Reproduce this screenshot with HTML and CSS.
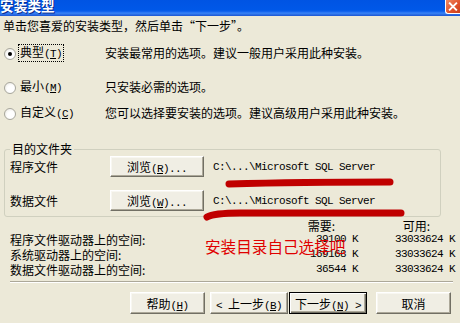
FILE: index.html
```html
<!DOCTYPE html>
<html lang="zh-CN">
<head>
<meta charset="utf-8">
<title>安装类型</title>
<link rel="stylesheet" href="styles.css">
</head>
<body>
<div class="win">
  <div class="titlebar">
    <span class="title">安装类型</span>
    <span class="close"><svg width="15" height="14" viewBox="0 0 15 14"><path d="M4 3 L11 10 M11 3 L4 10" stroke="#fff" stroke-width="2" stroke-linecap="square"/></svg></span>
  </div>
  <div class="intro">单击您喜爱的安装类型，然后单击“下一步”。</div>
  <div class="options">
    <div class="opt opt1">
      <span class="radio checked"></span>
      <span class="olabel focus">典型<span class="mono">(<u>T</u>)</span></span>
      <span class="odesc">安装最常用的选项。建议一般用户采用此种安装。</span>
    </div>
    <div class="opt opt2">
      <span class="radio"></span>
      <span class="olabel">最小<span class="mono">(<u>M</u>)</span></span>
      <span class="odesc">只安装必需的选项。</span>
    </div>
    <div class="opt opt3">
      <span class="radio"></span>
      <span class="olabel">自定义<span class="mono">(<u>C</u>)</span></span>
      <span class="odesc">您可以选择要安装的选项。建议高级用户采用此种安装。</span>
    </div>
  </div>
  <fieldset class="group">
    <legend>目的文件夹</legend>
    <div class="frow">
      <span class="flabel">程序文件</span>
      <span class="btn browse"><span>浏览<span class="mono">(<u>R</u>)...</span></span></span>
      <span class="path mono">C:\...\Microsoft SQL Server</span>
    </div>
    <div class="frow frow2">
      <span class="flabel">数据文件</span>
      <span class="btn browse"><span>浏览<span class="mono">(<u>W</u>)...</span></span></span>
      <span class="path mono">C:\...\Microsoft SQL Server</span>
    </div>
  </fieldset>
  <div class="space">
    <span></span>
    <span class="hdr hneed">需要:</span>
    <span class="hdr havail">可用:</span>
    <span class="slabel">程序文件驱动器上的空间:</span>
    <span class="num mono">39100 K</span>
    <span class="num mono">33033624 K</span>
    <span class="slabel">系统驱动器上的空间:</span>
    <span class="num mono">169168 K</span>
    <span class="num mono">33033624 K</span>
    <span class="slabel">数据文件驱动器上的空间:</span>
    <span class="num mono">36544 K</span>
    <span class="num mono">33033624 K</span>
  </div>
  <div class="sep"></div>
  <div class="buttons">
    <span class="btn bhelp"><span>帮助<span class="mono">(<u>H</u>)</span></span></span>
    <span class="btn bback"><span><span class="mono">&lt; </span>上一步<span class="mono">(<u>B</u>)</span></span></span>
    <span class="btn bnext"><span>下一步<span class="mono">(<u>N</u>) &gt;</span></span></span>
    <span class="btn bcancel">取消</span>
  </div>
  <svg class="marks" width="460" height="323" viewBox="0 0 460 323">
    <path d="M229 184 Q300 182 390 182" fill="none" stroke="#c00000" stroke-width="7" stroke-linecap="round"/>
    <path d="M207 217 Q214 213 240 213 L401 213" fill="none" stroke="#c00000" stroke-width="7" stroke-linecap="round"/>
  </svg>
  <div class="note">安装目录自己选择吧</div>
</div>
</body>
</html>
```

FILE: styles.css
```css
html, body {
  margin: 0;
  padding: 0;
  background: #ece9d8;
}
.win {
  position: relative;
  width: 460px;
  height: 323px;
  overflow: hidden;
  background: #ece9d8;
  font-family: "Noto Sans CJK SC", sans-serif;
  font-size: 12px;
  color: #000;
}
.mono {
  font-family: "Liberation Mono", monospace;
  font-size: 11px;
  letter-spacing: -0.6px;
}
u { text-decoration: underline; text-underline-offset: 1px; }

.titlebar {
  height: 16px;
  display: flex;
  justify-content: space-between;
  align-items: flex-start;
  background: linear-gradient(#0054e3 0, #0058e8 10px, #1a68f0 12px, #3a86f7 13px, #2f74ea 14px, #1c56d2 16px);
}
.title {
  color: #fff;
  font-weight: bold;
  font-size: 13.5px;
  line-height: 14px;
  margin-top: -2px;
  letter-spacing: 0.2px;
  text-shadow: 1px 1px 0 #0a2a8a;
}
.close {
  width: 15px;
  height: 14px;
  background: linear-gradient(135deg, #f08a62, #e0502a 60%, #c8401c);
  border-left: 1px solid #fff;
  border-bottom: 1px solid #fff;
  border-bottom-left-radius: 3px;
  box-sizing: border-box;
  display: flex;
}
.close svg { display: block; }

.intro {
  height: 20px;
  line-height: 20px;
  padding-left: 3px;
  white-space: nowrap;
}

.options { margin-top: 7px; }
.opt {
  display: grid;
  grid-template-columns: 14px 87px 1fr;
  align-items: center;
  height: 20px;
  padding-left: 4px;
  white-space: nowrap;
}
.opt2 { margin-top: 14px; }
.opt3 { margin-top: 6px; }
.radio {
  width: 12px;
  height: 12px;
  box-sizing: border-box;
  border-radius: 50%;
  border: 1px solid #a7a69c;
  background: radial-gradient(circle at 60% 60%, #ffffff 40%, #e6e4dc 100%);
  display: flex;
  align-items: center;
  justify-content: center;
  margin-top: 1px;
}
.radio.checked::after {
  content: "";
  width: 4px;
  height: 4px;
  border-radius: 50%;
  background: #000;
}
.olabel {
  justify-self: start;
  padding: 0 1px 0 1px;
  border: 1px solid transparent;
  line-height: 13px;
}
.olabel.focus { border: 1px dotted #000; }
.odesc { line-height: 16px; }

.group {
  margin: 19px 0 0 4px;
  width: 437px;
  box-sizing: border-box;
  padding: 0 0 6px 5px;
  border: 1px solid #d0d0bf;
  border-radius: 3px;
  min-inline-size: 0;
}
.group legend {
  margin-left: 0;
  padding: 0 2px;
  line-height: 14px;
  font-size: 12px;
}
.frow {
  display: grid;
  grid-template-columns: 91px 94px auto;
  column-gap: 9px;
  align-items: center;
  height: 20px;
  white-space: nowrap;
}
.frow2 { margin-top: 14px; }

.btn {
  display: flex;
  align-items: center;
  justify-content: center;
  box-sizing: border-box;
  background: #f0eee4;
  border: 1px solid;
  border-color: #ffffff #716f64 #716f64 #ffffff;
  box-shadow: inset -1px -1px 0 #aca899, inset 1px 1px 0 #f8f7f1;
  white-space: pre;
}
.browse { height: 21px; }

.space {
  display: grid;
  grid-template-columns: 190px 158px 97px;
  grid-template-rows: 12px 15px 15px 15px;
  margin-top: 3px;
  padding-left: 10px;
  align-items: center;
  white-space: nowrap;
}
.hdr { text-align: right; line-height: 12px; }
.hneed { padding-right: 23px; }
.havail { padding-right: 25px; }
.slabel { line-height: 15px; }
.num { text-align: right; line-height: 15px; }

.sep {
  margin: 4px 7px 0 10px;
  border-top: 1px solid #aca899;
  border-bottom: 1px solid #ffffff;
}

.buttons {
  display: flex;
  margin-top: 9px;
  padding-left: 130px;
}
.buttons .btn { height: 22px; }
.bhelp { width: 75px; }
.bback { width: 78px; margin-left: 5px; }
.bnext {
  width: 78px;
  margin-left: 1px;
  border-color: #000;
  box-shadow: inset 1px 1px 0 #fff, inset -1px -1px 0 #716f64, inset -2px -2px 0 #aca899;
}
.bcancel { width: 75px; margin-left: 9px; }

.marks {
  position: absolute;
  left: 0;
  top: 0;
  pointer-events: none;
}
.note {
  position: absolute;
  left: 205px;
  top: 237px;
  color: #e00000;
  font-size: 15.6px;
  line-height: 18px;
  white-space: nowrap;
}
```
